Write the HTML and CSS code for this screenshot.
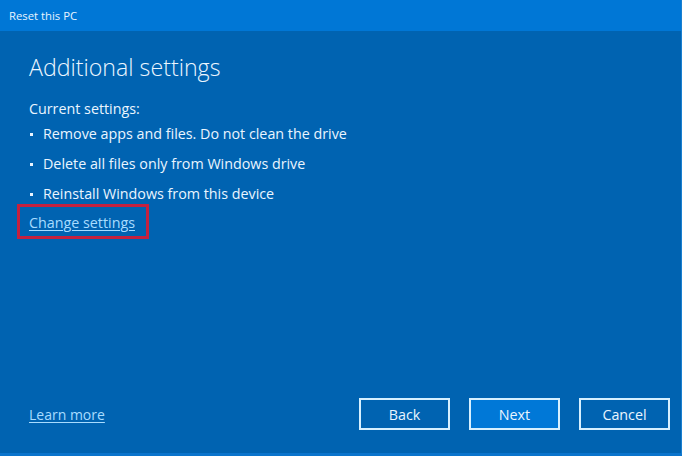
FILE: index.html
```html
<!DOCTYPE html>
<html lang="en">
<head>
    <meta charset="UTF-8">
    <title>Reset this PC</title>
    <link rel="stylesheet" href="styles.css">
</head>
<body>
    <div class="window">
        <div class="titlebar">Reset this PC</div>
        <div class="content">
            <h1>Additional settings</h1>
            <p class="label">Current settings:</p>
            <ul class="settings">
                <li>Remove apps and files. Do not clean the drive</li>
                <li>Delete all files only from Windows drive</li>
                <li>Reinstall Windows from this device</li>
            </ul>
            <div class="highlight"><a href="#">Change settings</a></div>
        </div>
        <div class="footer">
            <a href="#" class="learn">Learn more</a>
            <div class="buttons">
                <button>Back</button>
                <button class="primary">Next</button>
                <button>Cancel</button>
            </div>
        </div>
    </div>
</body>
</html>
```

FILE: styles.css
```css
html, body {
    margin: 0;
    height: 100%;
}
body {
    font-family: "Open Sans", "Noto Sans", sans-serif;
    background-color: #0063b1;
    color: #ffffff;
}
.window {
    display: flex;
    flex-direction: column;
    height: 100vh;
    box-sizing: border-box;
    border-right: 1px solid #1a7fd0;
    border-bottom: 3px solid #0a74cc;
}
.titlebar {
    height: 31px;
    line-height: 31px;
    padding-left: 9px;
    font-size: 11.3px;
    background-color: #0077d6;
    color: #e8f4ff;
    flex-shrink: 0;
}
.content {
    flex: 1;
    padding: 20px 29px 0;
}
h1 {
    font-weight: 300;
    font-size: 23.2px;
    line-height: 32px;
    margin: 0 0 16px;
    color: #ecf6ff;
}
.label {
    margin: 0;
    font-size: 14.3px;
    line-height: 20px;
    color: #eaf5ff;
}
.settings {
    list-style: none;
    margin: 0;
    padding: 0;
}
.settings li {
    font-size: 14.3px;
    line-height: 20px;
    margin-top: 10px;
    padding-left: 14px;
    position: relative;
    color: #eaf5ff;
}
.settings li:first-child {
    margin-top: 5px;
}
.settings li::before {
    content: "";
    position: absolute;
    left: 1px;
    top: 9px;
    width: 3px;
    height: 3px;
    background-color: #eaf5ff;
}
a {
    color: #a8dcff;
    font-size: 14.3px;
    text-decoration: underline;
    text-underline-offset: 2px;
}
.learn {
    font-size: 14px;
}
.highlight {
    display: inline-block;
    margin: 0 0 0 -12px;
    padding: 4px 11px 3px 9px;
    border: 3px solid #c4213f;
}
.footer {
    display: flex;
    align-items: center;
    justify-content: space-between;
    padding: 0 11px 23px 29px;
}
.buttons {
    display: flex;
    gap: 19px;
}
button {
    width: 91px;
    height: 32px;
    font-family: inherit;
    font-size: 14.3px;
    color: #eaf5ff;
    background-color: #0063b1;
    border: 2px solid #d6f0ff;
    cursor: pointer;
}
button.primary {
    background-color: #0078d7;
}
```
